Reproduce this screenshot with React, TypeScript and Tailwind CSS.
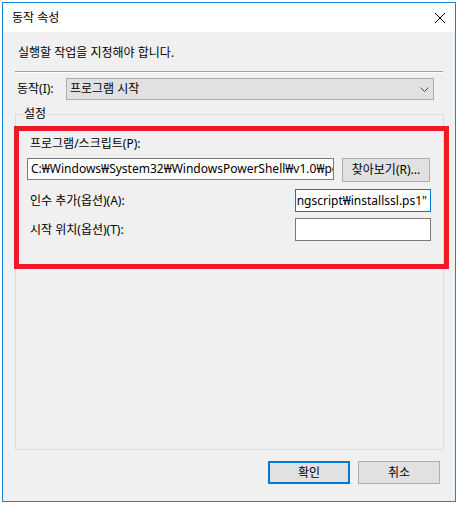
const font = "font-['Noto_Sans','Noto_Sans_CJK_KR',sans-serif]";

const CloseIcon = () => (
  <svg width="12" height="12" viewBox="0 0 12 12" className="block">
    <path d="M1 1 L11 11 M11 1 L1 11" stroke="#000" strokeWidth="1" fill="none" />
  </svg>
);

const Chevron = () => (
  <svg width="9" height="5" viewBox="0 0 9 5" className="block">
    <path d="M0.5 0.5 L4.5 4.5 L8.5 0.5" stroke="#404040" strokeWidth="1" fill="none" />
  </svg>
);

export default function App() {
  return (
    <div className={`${font} w-[458px] h-[506px] bg-white pl-[2px] pt-[2px] text-[12px] leading-[16px] text-black`}>
      <div className="relative w-[454px] h-[500px] border border-[#1883d7] flex flex-col">
        {/* title bar */}
        <div className="h-[29px] bg-white flex items-center justify-between pl-[9px] pr-[9px]">
          <span>동작 속성</span>
          <CloseIcon />
        </div>

        {/* body */}
        <div className="flex-1 bg-[#f0f0f0] flex flex-col">
          <div className="mt-[13px] pl-[15px]">실행할 작업을 지정해야 합니다.</div>
          <div className="mt-[10px] ml-[12px] w-[428px] border-t border-[#a0a0a0] border-b border-b-white" />

          <div className="mt-[5px] ml-[14px] flex items-center">
            <span className="w-[49px]">동작(I):</span>
            <div className="w-[368px] h-[22px] bg-[#e1e1e1] border border-[#adadad] flex items-center justify-between pl-[3px] pr-[4px]">
              <span>프로그램 시작</span>
              <Chevron />
            </div>
          </div>

          {/* group box */}
          <div className="relative mt-[14px] ml-[12px] w-[429px] h-[336px] border border-[#dcdcdc] flex flex-col">
            <span className="absolute -top-[9px] left-[7px] bg-[#f0f0f0] px-[1px]">설정</span>

            <div className="mt-[21px] ml-[14px]">프로그램/스크립트(P):</div>
            <div className="mt-[6px] ml-[11px] flex items-start gap-[8px]">
              <div className="w-[307px] h-[22px] bg-white border border-[#7a7a7a] overflow-hidden whitespace-nowrap pl-[3px] leading-[20px]">
                C:₩Windows₩System32₩WindowsPowerShell₩v1.0₩powershell.exe
              </div>
              <div className="w-[88px] h-[24px] bg-[#e1e1e1] border border-[#adadad] flex items-center justify-center">
                찾아보기(R)...
              </div>
            </div>

            <div className="mt-[7px] flex items-center justify-between pl-[14px] pr-[12px]">
              <span>인수 추가(옵션)(A):</span>
              <div className="w-[136px] h-[23px] bg-white border border-[#0078d7] overflow-hidden flex items-center justify-end pr-[3px] whitespace-nowrap">
                <span>-File C:₩workingscript₩installssl.ps1"</span>
                <span className="w-[1px] h-[14px] bg-black" />
              </div>
            </div>

            <div className="mt-[6px] flex items-center justify-between pl-[14px] pr-[12px]">
              <span>시작 위치(옵션)(T):</span>
              <div className="w-[136px] h-[23px] bg-white border border-[#7a7a7a]" />
            </div>
          </div>

          {/* buttons */}
          <div className="mt-[11px] mr-[15px] flex justify-end gap-[8px]">
            <div className="w-[82px] h-[23px] bg-[#e1e1e1] border-2 border-[#0078d7] flex items-center justify-center">확인</div>
            <div className="w-[82px] h-[23px] bg-[#e1e1e1] border border-[#adadad] flex items-center justify-center">취소</div>
          </div>
        </div>

        {/* red annotation */}
        <div className="absolute left-[11px] top-[123px] w-[435px] h-[143px] border-[5px] border-[#ed1c24] pointer-events-none" />
      </div>
    </div>
  );
}
